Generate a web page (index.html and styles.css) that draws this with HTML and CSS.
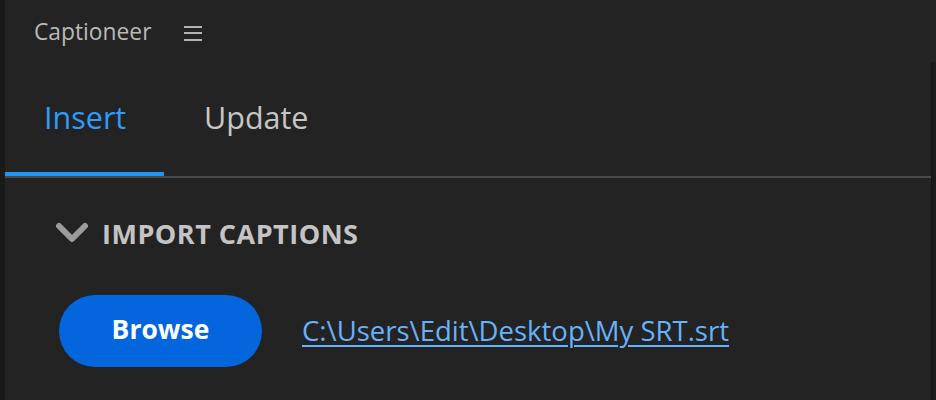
FILE: index.html
```html
<!DOCTYPE html>
<html>
<head>
<meta charset="utf-8">
<link rel="stylesheet" href="styles.css">
</head>
<body>
<div class="frame">
  <div class="gutter"></div>
  <div class="panel">
    <header class="titlebar">
      <span class="title">Captioneer</span>
      <svg class="menu" width="18" height="16" viewBox="0 0 18 16">
        <rect x="0" y="1" width="18" height="2" fill="#b4b4b4"/>
        <rect x="0" y="7" width="18" height="2" fill="#b4b4b4"/>
        <rect x="0" y="14" width="18" height="2" fill="#b4b4b4"/>
      </svg>
    </header>
    <nav class="tabs">
      <div class="tab active">Insert</div>
      <div class="tab">Update</div>
    </nav>
    <section class="section">
      <div class="section-head">
        <svg class="chevron" width="34" height="22" viewBox="0 0 34 22">
          <path d="M4 4 L17 17 L30 4" fill="none" stroke="#9b9b9b" stroke-width="6" stroke-linecap="round" stroke-linejoin="round"/>
        </svg>
        <span class="section-title">IMPORT CAPTIONS</span>
      </div>
      <div class="row">
        <button class="browse">Browse</button>
        <a class="path" href="#">C:\Users\Edit\Desktop\My SRT.srt</a>
      </div>
    </section>
  </div>
  <div class="rightbar"></div>
</div>
</body>
</html>
```

FILE: styles.css
```css
html, body {
  margin: 0;
  padding: 0;
  background: #232323;
}
body {
  font-family: "Open Sans", "Noto Sans", sans-serif;
  width: 936px;
  height: 400px;
  overflow: hidden;
}
.frame {
  display: flex;
  height: 400px;
}
.gutter {
  width: 5px;
  background: #1a1a1a;
  flex: none;
}
.rightbar {
  width: 4px;
  flex: none;
  margin-top: 62px;
  background: #1b1b1b;
  border-left: 1px solid #151515;
}
.panel {
  flex: 1;
  background: #232323;
  display: flex;
  flex-direction: column;
}
.titlebar {
  height: 66px;
  display: flex;
  align-items: center;
  padding-left: 29px;
  box-sizing: border-box;
}
.title {
  color: #b9b9b9;
  font-size: 22.8px;
  line-height: 1;
  margin-top: -1px;
}
.menu {
  margin-left: 33px;
}
.tabs {
  display: flex;
  height: 112px;
  border-bottom: 2px solid #4a4a4a;
  box-sizing: border-box;
}
.tab {
  font-size: 30.5px;
  color: #c6c6c6;
  padding: 0 40px 8px 40px;
  display: flex;
  align-items: center;
  line-height: 1;
  box-sizing: border-box;
  height: 110px;
}
.tab.active {
  color: #2f9bfb;
  border-bottom: 4px solid #2196f3;
  padding-left: 39px;
  padding-bottom: 4px;
  width: 159px;
}
.section {
  padding-left: 50px;
}
.section-head {
  display: flex;
  align-items: center;
  margin-top: 38px;
  height: 34px;
}
.chevron {
  flex: none;
}
.section-title {
  margin-left: 13px;
  font-size: 27px;
  font-weight: 700;
  color: #c4c4c4;
  letter-spacing: 0.5px;
  line-height: 1;
}
.row {
  display: flex;
  align-items: center;
  margin-top: 45px;
  margin-left: 4px;
}
.browse {
  width: 203px;
  height: 72px;
  border: none;
  border-radius: 36px;
  background: #0466dd;
  color: #ffffff;
  font-family: "Open Sans", "Noto Sans", sans-serif;
  font-weight: 700;
  font-size: 26.5px;
  padding: 0 0 4px;
}
.path {
  margin-left: 40px;
  color: #67b2f8;
  font-size: 27.5px;
  text-decoration: underline;
  text-decoration-thickness: 2px;
  text-underline-offset: 4px;
  margin-top: -2px;
}
```
